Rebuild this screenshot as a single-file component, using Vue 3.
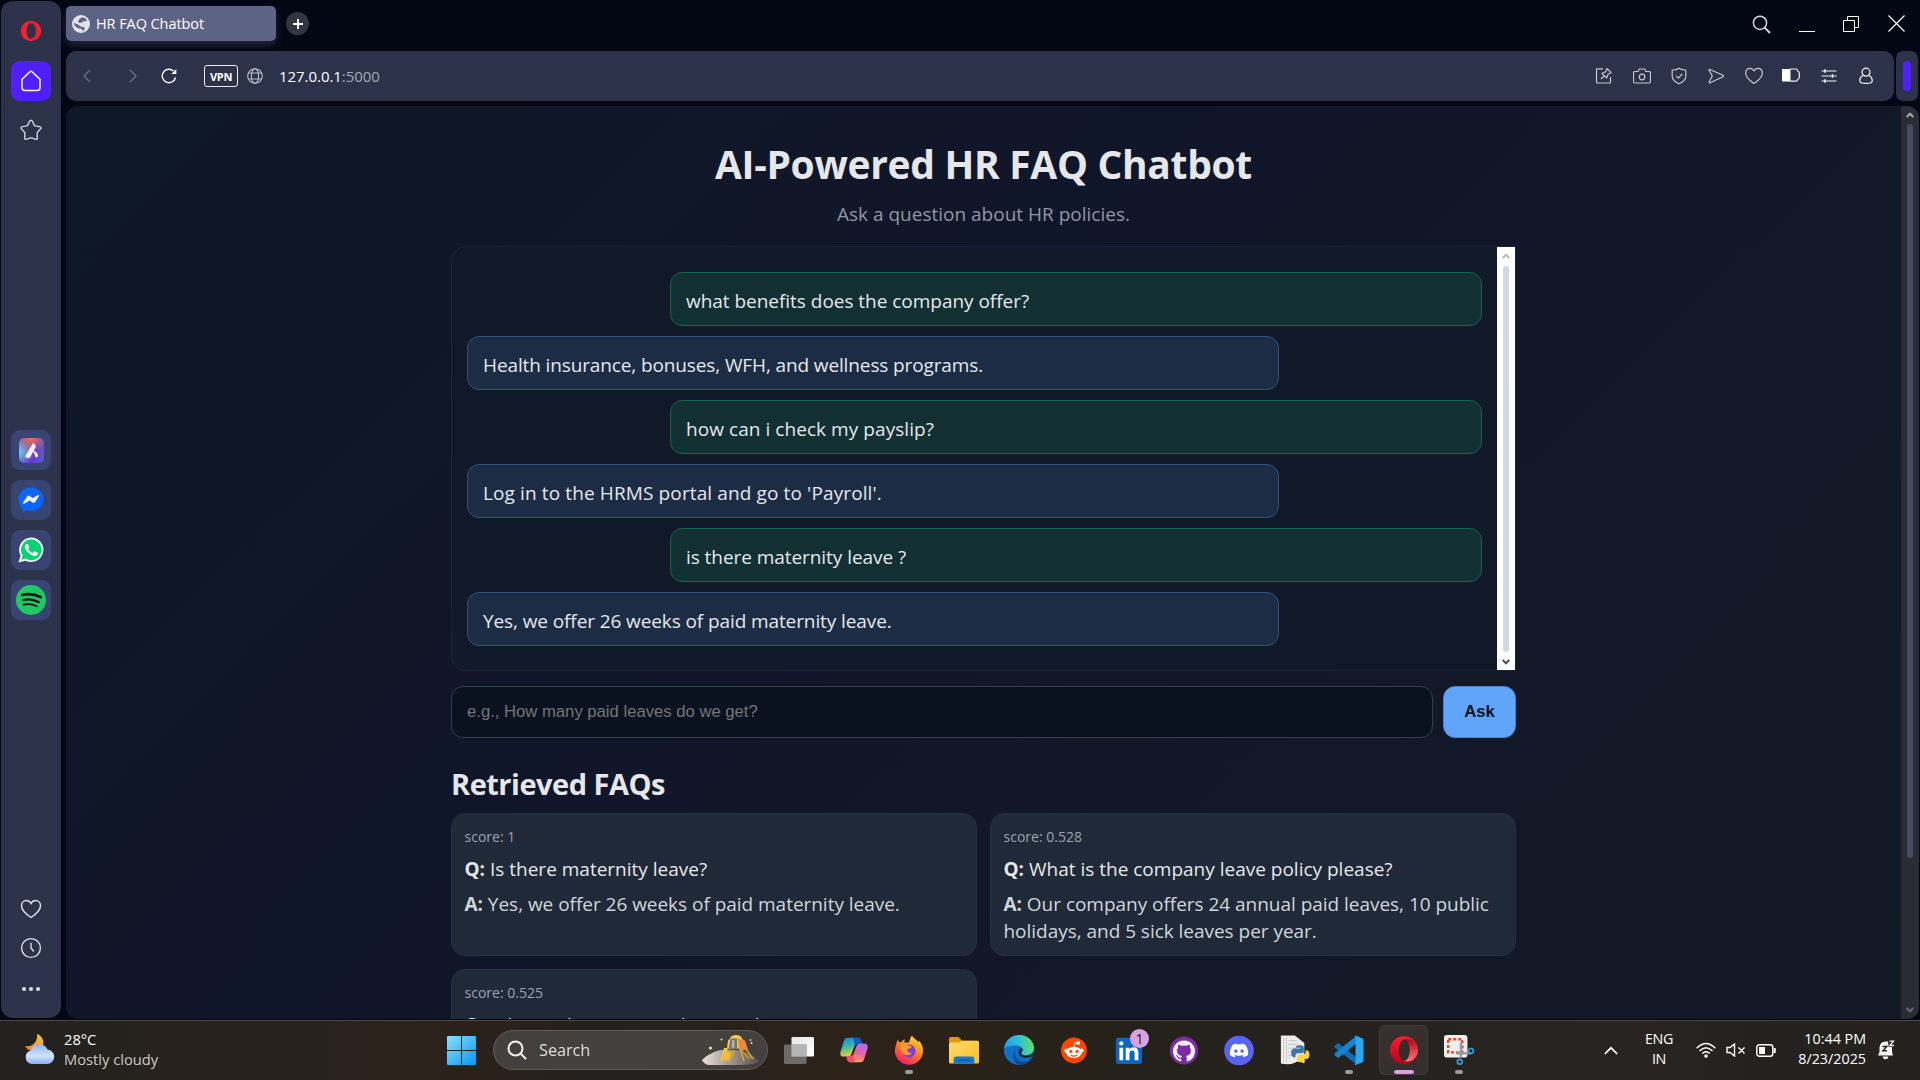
<script setup>
const messages = [
  { who: 'user', text: 'what benefits does the company offer?', track: -0.03 },
  { who: 'bot', text: 'Health insurance, bonuses, WFH, and wellness programs.', track: -0.12 },
  { who: 'user', text: 'how can i check my payslip?', track: 0.06 },
  { who: 'bot', text: "Log in to the HRMS portal and go to 'Payroll'.", track: 0.12 },
  { who: 'user', text: 'is there maternity leave ?', track: -0.06 },
  { who: 'bot', text: 'Yes, we offer 26 weeks of paid maternity leave.', track: -0.1 },
]

const faqs = [
  { score: '1', q: 'Is there maternity leave?', a: 'Yes, we offer 26 weeks of paid maternity leave.' },
  { score: '0.528', q: 'What is the company leave policy please?', a: 'Our company offers 24 annual paid leaves, 10 public holidays, and 5 sick leaves per year.' },
  { score: '0.525', q: 'What is the company leave policy?', a: '' },
]
</script>

<template>
  <div class="desktop">
    <div class="browser">
      <aside class="sidebar">
        <svg class="opera-logo" width="22" height="22" viewBox="0 0 22 22"><path fill="#ff1b2d" fill-rule="evenodd" d="M11 .8a10.2 10.2 0 1 0 0 20.4A10.2 10.2 0 0 0 11 .8zm0 2.400c2.700 0 4.800 3.400 4.800 7.800s-2.100 7.800-4.800 7.800S6.600 15.400 6.600 11 8.300 3.200 11 3.200z"/><path d="M12.500 1.200c3 1.500 4.600 5.400 4.600 9.800s-1.600 8.300-4.600 9.800" fill="none" stroke="#2c324a" stroke-width=".5" opacity=".5"/></svg>
        <div class="home">
          <svg width="24" height="24" viewBox="0 0 24 24" fill="none" stroke="#fff" stroke-width="1.500" stroke-linejoin="round"><path d="M3 10.200 11 2.700q1-.9 2 0l8 7.500V18.500a3 3 0 0 1-3 3H6a3 3 0 0 1-3-3z"/></svg>
        </div>
        <svg class="star" width="24" height="24" viewBox="0 0 24 24" fill="none" stroke="#cdd5e0" stroke-width="1.400" stroke-linejoin="round"><path d="M10.300 3.700q1.700-3 3.400 0l1.400 3.200q.4.900 1.400 1l3.900.7q2.800.7.8 2.700l-2.500 2.600q-.7.7-.6 1.600l.2 4.300q.1 2-1.700 1.500l-3.200-1.100q-1.400-.4-2.800 0l-3.200 1.100q-1.800.5-1.700-1.500l.2-4.300q.1-.9-.6-1.600l-2.500-2.600q-2-2 .8-2.700l3.900-.7q1-.1 1.400-1z"/></svg>
        <div class="apps">
          <div class="app">
            <div class="aria"><svg width="25" height="25" viewBox="0 0 25 25"><path d="M14.400 6 7 18.500q1.500 1.500 3.500.3L16 8.500z" stroke="#f3f1f6" stroke-width="1.600" stroke-linejoin="round" fill="#f3f1f6"/><path d="M13.300 12.800q4.500.2 5.700 4.500.3 2-1.600 1.900-1.500-.2-1.600-2-.3-2.500-2.500-4.400z" fill="#f3f1f6"/></svg></div>
          </div>
          <div class="app">
            <svg width="26" height="26" viewBox="0 0 26 26"><path fill="#0a66ff" d="M13 .5C6 .5.500 5.700.500 12.300c0 3.900 1.700 6.900 4.500 9v4l3.300-2c1.500.5 3 .8 4.700.8 7 0 12.500-5.200 12.500-11.800S20 .5 13 .5z"/><path fill="#eef0f5" d="m5 15.800 4.200-6.500q1.100-1.500 2.600-.4l2.800 2 5.500-2.800q1.600-.6.900.8l-3.800 6.200q-1.200 1.600-2.700.5l-2.800-2.100-5.500 3.200q-1.700.6-1.200-.9z"/></svg>
          </div>
          <div class="app">
            <svg width="26" height="26" viewBox="0 0 26 26"><path fill="#f0f0f3" d="M13.300.5A12.300 12.300 0 0 0 2.500 18.700L.4 25.600l7-1.900A12.300 12.300 0 1 0 13.300.5z"/><path fill="#06d472" d="M13.300 2.600a10.300 10.300 0 0 0-8.600 15.900l-1.300 4.300 4.400-1.200A10.300 10.300 0 1 0 13.300 2.600z"/><path fill="#f0f0f3" d="M8.200 7.300c.5-.5 1.600-.5 1.900.1l1.100 2.600c.2.600-.3 1.200-1 2 1 2 2.500 3.300 4.600 4.100l1.300-1.500c.3-.3.700-.3 1.100-.1l2.500 1.200c.6.400.2 1.900-.7 2.600-3.600 2.800-12-4-12-8.300 0-1.300.5-2.100 1.200-2.700z"/></svg>
          </div>
          <div class="app">
            <svg width="30" height="30" viewBox="0 0 30 30"><circle cx="15" cy="15" r="15" fill="#1fc863"/><g fill="none" stroke="#0b1410" stroke-linecap="round"><path d="M6.300 10q9.500-2.400 18.500 2.200" stroke-width="2.600"/><path d="M7.200 15q8-2 15.500 2" stroke-width="2.200"/><path d="M7.600 19.600q7-1.700 13.200 1.700" stroke-width="1.800"/></g></svg>
          </div>
        </div>
        <div class="side-bottom">
          <svg width="22" height="20" viewBox="0 0 22 20" fill="none" stroke="#d7dde6" stroke-width="1.500"><path d="M11 18.500C8 16.500 1.500 12 1.500 6.800 1.500 3.500 3.800 1.500 6.300 1.500c2 0 3.700 1 4.700 3 1-2 2.700-3 4.700-3 2.500 0 4.800 2 4.800 5.300 0 5.200-6.500 9.700-9.500 11.700z"/></svg>
          <svg width="22" height="22" viewBox="0 0 22 22" fill="none" stroke="#d7dde6" stroke-width="1.400"><circle cx="11" cy="11" r="9.400"/><path d="M11 5.800V11l2.800 3.500"/></svg>
          <svg width="22" height="8" viewBox="0 0 22 8" fill="#d7dde6"><circle cx="4" cy="4" r="2.100"/><circle cx="11" cy="4" r="2.100"/><circle cx="18" cy="4" r="2.100"/></svg>
        </div>
      </aside>

      <div class="main">
        <header class="tabs">
          <div class="tab">
            <svg width="18" height="18" viewBox="0 0 18 18"><circle cx="9" cy="9" r="9" fill="#e2e3e8"/><path fill="#5d6384" d="M9.500 2.500c2.500-.5 5 1 5.500 3l-1.500 1-2-.5-1.500 1.500-2.500.5L6 6.500l1-2zM2 8l4 1.500 2.500 2 3 .5 1.500 1.500-2 3-1-2.500-3-.5L4 12 2 9.500z"/></svg>
            <span>HR FAQ Chatbot</span>
          </div>
          <div class="new-tab"><svg width="10" height="10" viewBox="0 0 10 10" stroke="#fff" stroke-width="2"><path d="M5 0v10M0 5h10"/></svg></div>
          <div class="win">
            <svg width="19" height="19" viewBox="0 0 19 19" fill="none" stroke="#d5d7dd" stroke-width="1.500"><circle cx="8" cy="7.800" r="6.600"/><path d="m12.600 12.600 5.400 5.400" stroke-width="2"/></svg>
            <svg width="16" height="17" viewBox="0 0 16 17"><path d="M0 16.500h16" stroke="#fff"/></svg>
            <svg width="17" height="17" viewBox="0 0 17 17" fill="none" stroke="#fff"><path d="M.5 5.500h11v11H.5zM4.500 5V1.500h11v11H12"/></svg>
            <svg width="17" height="17" viewBox="0 0 17 17" stroke="#fff" stroke-width="1.200"><path d="m.5.500 16 16M16.500.500l-16 16"/></svg>
          </div>
        </header>

        <div class="bar-row">
          <div class="toolbar">
            <div class="nav">
              <svg width="8" height="14" viewBox="0 0 8 14" fill="none" stroke="#686e80" stroke-width="1.400"><path d="M7 1 1 7l6 6"/></svg>
              <svg width="8" height="14" viewBox="0 0 8 14" fill="none" stroke="#686e80" stroke-width="1.400"><path d="m1 1 6 6-6 6"/></svg>
              <svg width="16" height="16" viewBox="0 0 16 16" fill="none" stroke="#fff" stroke-width="1.400"><path d="M14.500 9.500A6.700 6.700 0 1 1 12.500 3"/><path d="M15.300 1v5h-5z" fill="#fff" stroke="none"/></svg>
            </div>
            <div class="vpn">VPN</div>
            <svg class="globe" width="16" height="16" viewBox="0 0 16 16" fill="none" stroke="#b9bec8" stroke-width="1.100"><circle cx="8" cy="8" r="7.300"/><ellipse cx="8" cy="8" rx="3.600" ry="7.300"/><path d="M1.500 5h13M1.500 11h13"/></svg>
            <div class="url">127.0.0.1<i>:5000</i></div>
            <div class="tools">
              <svg viewBox="0 0 18 18"><path d="M8 1.800H2q-.5 0-.5.500V15q0 1 1 1h12.500q.5 0 .5-.5V10M6 12l3-3M12 1.500l4.200 4.200-3 1.300-1.500 4-4.700-4.700 3.700-1.600z"/></svg>
              <svg viewBox="0 0 18 18"><path d="M2 4.500h3L6.300 2h5.400L13 4.500h3q1.500 0 1.500 1.500v8.500q0 1.500-1.500 1.500H2q-1.500 0-1.500-1.500V6Q.5 4.500 2 4.500z"/><circle cx="9" cy="10" r="2.800"/></svg>
              <svg viewBox="0 0 18 18"><path d="M9 1.200q3 2 6.800 1.800v6.300Q15.500 14 9 16.800 2.500 14 2.200 9.300V3Q6 3.200 9 1.200zM6 8.800l2.300 2.300L12.200 7"/></svg>
              <svg viewBox="0 0 18 18"><path d="M2.200 2.200 16 8.300q1 .7 0 1.400L3.200 15.800q-1.500.3-1-1L5.300 9 2.200 3.500z"/></svg>
              <svg viewBox="0 0 18 18"><path d="M9 16.500C6 14.500.7 11 .7 6.200.7 3.200 2.600 1.300 5 1.300c1.800 0 3.200.9 4 2.700.8-1.800 2.200-2.700 4-2.700 2.400 0 4.300 1.900 4.300 4.900 0 4.800-5.300 8.300-8.300 10.300z"/></svg>
              <svg viewBox="0 0 18 18" class="batt"><path d="M0 2h8.500v12.500H0z" fill="#fff" stroke="none"/><path d="M8 2h6q1.500 0 1.500 1.500v.5q1.800.5 1.800 2v4.500q0 1.500-1.800 2v.5q0 1.200-1.500 1.200H8"/></svg>
              <svg viewBox="0 0 18 18"><path d="M1.500 4h15M1.500 9h15M1.500 14h15" /><path d="M5 2.300v3.400M12.500 7.300v3.400M5 12.300v3.400" stroke-width="1.600"/></svg>
              <svg viewBox="0 0 18 18"><circle cx="9" cy="5.200" r="4"/><path d="M5.700 8.500C3.500 10 2.700 12 2.700 13.500c0 2 1.300 2.900 6.300 2.900s6.300-.9 6.300-2.900c0-1.500-.8-3.500-3-5"/></svg>
            </div>
          </div>
          <div class="mini"><b></b></div>
        </div>

        <div class="viewport">
          <div class="page">
            <h1>AI-Powered HR FAQ Chatbot</h1>
            <p class="sub">Ask a question about HR policies.</p>
            <section class="chat">
              <div class="log">
                <div v-for="m in messages" :key="m.text" class="msg" :class="m.who" :style="{ letterSpacing: m.track + 'px' }">{{ m.text }}</div>
              </div>
              <div class="sb">
                <svg width="8" height="6" viewBox="0 0 8 6" fill="none" stroke="#b9b9b9" stroke-width="2"><path d="m.7 5 3.300-3.300L7.300 5"/></svg>
                <b></b>
                <svg width="8" height="6" viewBox="0 0 8 6" fill="none" stroke="#505050" stroke-width="2"><path d="m.7 1 3.300 3.300L7.300 1"/></svg>
              </div>
            </section>
            <div class="ask">
              <div class="field">e.g., How many paid leaves do we get?</div>
              <div class="btn">Ask</div>
            </div>
            <h2>Retrieved FAQs</h2>
            <div class="cards">
              <article v-for="f in faqs" :key="f.score" class="card">
                <div class="score">score: {{ f.score }}</div>
                <div class="q"><b>Q:</b> {{ f.q }}</div>
                <div v-if="f.a" class="a"><b>A:</b> {{ f.a }}</div>
              </article>
            </div>
          </div>
          <div class="psb">
            <svg width="8" height="6" viewBox="0 0 8 6" fill="none" stroke="#a5a5aa" stroke-width="2"><path d="m.7 5 3.300-3.300L7.300 5"/></svg>
            <b></b>
            <svg width="8" height="6" viewBox="0 0 8 6" fill="none" stroke="#66666e" stroke-width="2"><path d="m.7 1 3.300 3.300L7.300 1"/></svg>
          </div>
        </div>
      </div>
    </div>

    <footer class="taskbar">
      <div class="weather">
        <svg width="32" height="32" viewBox="0 0 32 32">
          <defs>
            <linearGradient id="moon" x1="1" y1="0" x2="0" y2="1"><stop offset="0" stop-color="#f5c53a"/><stop offset="1" stop-color="#ee7d22"/></linearGradient>
            <linearGradient id="cloud" x1="0" y1="0" x2="0" y2="1"><stop offset="0" stop-color="#8fb5ef"/><stop offset=".6" stop-color="#d3e2fa"/><stop offset="1" stop-color="#86aef2"/></linearGradient>
          </defs>
          <path fill="url(#moon)" d="M13 0c7 2 8 11 4 15-4 3.500-13 3-16-3 8 1.500 13-5 12-12z"/>
          <path fill="url(#cloud)" d="M7.500 30a7 7 0 0 1-.8-13.600A9 9 0 0 1 23.500 15.500 7.300 7.300 0 0 1 24 30z"/>
        </svg>
        <div><span>28°C</span><small>Mostly cloudy</small></div>
      </div>

      <svg class="start" width="29" height="29" viewBox="0 0 29 29"><defs><linearGradient id="win" x1="0" y1="0" x2="1" y2="1"><stop offset="0" stop-color="#86e1fb"/><stop offset="1" stop-color="#0a95f5"/></linearGradient></defs><path fill="url(#win)" d="M0 1q0-1 1-1h13v14H0zM15 0h13q1 0 1 1v13H15zM0 15h14v14H1q-1 0-1-1zM15 15h14v13q0 1-1 1H15z"/></svg>

      <div class="search">
        <svg width="20" height="20" viewBox="0 0 20 20" fill="none" stroke="#f1f1f1" stroke-width="2"><circle cx="8.500" cy="8.500" r="7"/><path d="m13.500 13.500 5 5" stroke-linecap="round"/></svg>
        <span>Search</span>
        <svg class="lander" width="58" height="32" viewBox="0 0 58 32">
          <defs><linearGradient id="ground"><stop offset="0" stop-color="#e9e2d8"/><stop offset=".45" stop-color="#a79d94"/><stop offset="1" stop-color="#574f4d"/></linearGradient></defs>
          <path fill="url(#ground)" d="M0 26q10-10 24-10.500Q48 15 57 28q-6 3-20 3H6Q2 30 0 26z"/>
          <path fill="#c08a28" d="M36 14h3l10 11h-3z"/><path fill="#f2c24a" d="m22 14-4 13h3l5-13z"/>
          <path fill="#f5c94c" d="M28 4.500Q29 1 34 1t6 3.500l3 3v7H25l1-8z"/><path fill="#e88a3a" d="m36 4.500 7 2 3 9-9 1z"/><path fill="#6d7176" d="M28.500 4.500H35V15l-8-1z"/><path fill="#aeb4ba" d="M30 6h2.500v8l-3-.5z"/>
          <path fill="#eebb3c" d="m23 17.500 10 1-5 8H17z"/><path fill="#d49b32" d="m30 17 3 0-4 9-2 0z"/><path stroke="#d1a453" stroke-width="1.500" d="m44 15 7 10M38 15l4 12"/>
          <g fill="#f1dfae"><circle cx="8.500" cy="14" r="1.500"/><circle cx="19.500" cy="5.500" r="1"/><circle cx="48.500" cy="6" r=".9"/><circle cx="49.500" cy="9" r="1"/></g>
        </svg>
      </div>

      <nav class="dock">
        <div class="item"><svg viewBox="0 0 32 32"><defs><linearGradient id="tv" x1="0" y1="0" x2="1" y2="1"><stop offset="0" stop-color="#e6e6e6"/><stop offset="1" stop-color="#fff"/></linearGradient></defs><rect x="8" y="2" width="24" height="21" rx="1.500" fill="url(#tv)"/><rect x="0" y="10" width="24" height="21" rx="1.500" fill="#777" opacity=".85"/><path d="M8 10h16v13H8z" fill="#b5b5b5"/></svg></div>
        <div class="item"><svg viewBox="0 0 32 32"><defs><linearGradient id="cpa" x1="0" y1="0" x2=".3" y2="1"><stop offset="0" stop-color="#1a7fe0"/><stop offset=".5" stop-color="#2fb8b0"/><stop offset="1" stop-color="#f5d21c"/></linearGradient><linearGradient id="cpb" x1=".5" y1="0" x2=".3" y2="1"><stop offset="0" stop-color="#a96cf5"/><stop offset=".5" stop-color="#ee5fa0"/><stop offset="1" stop-color="#ffa64d"/></linearGradient></defs>
          <path fill="url(#cpa)" d="M9 3h11q2.500 0 3.200 2.600L24 8.500h-4q-2.500 0-3.200 2.400L13.500 20q-.9 3-4 3H5q-4.500 0-3.500-5L5 7q1-4 4-4z"/><path fill="#1556c6" d="M15 3h5q2.500 0 3.200 2.600L24.300 9.500H20q-2 0-3 1.500z"/>
          <path fill="url(#cpb)" d="M23 29H12q-2.500 0-3.200-2.600L8 23.500h4q2.500 0 3.200-2.400L18.500 12q.9-3 4-3H27q4.500 0 3.500 5L27 25q-1 4-4 4z"/><path fill="#f0506a" d="M17 29h-5q-2.500 0-3.200-2.600L7.700 22.500H12q2 0 3-1.500z"/><path fill="#2a211b" d="m17.800 11 1.500-1.300L14.500 21l-1.800 1.200z"/></svg></div>
        <div class="item run"><svg viewBox="0 0 32 32"><defs><linearGradient id="ff" x1=".8" y1="0" x2=".3" y2="1"><stop offset="0" stop-color="#ffe03a"/><stop offset=".45" stop-color="#ff8a1e"/><stop offset="1" stop-color="#f5156c"/></linearGradient></defs><path fill="url(#ff)" d="M19 .5c2 3 5 4.500 7 7l1-1.500c3 4 4 7 4 10.500A15 15 0 0 1 1 17C1 12 3 8 4 5l2 3 2-.5c1-1.500 2-2.500 3.500-3L11 8h5c1-3 1.500-5 3-7.500z"/><circle cx="16" cy="17" r="7" fill="#7542e5"/><path fill="#ff9a2a" d="M6 12c3-3 6-3 9-1l4 1.500c-1 2-3 2-4.500 2.500-1 3 2 5 5 4-3 4-9 3-11-1-1.500-2-2.500-4-2.500-6z"/></svg></div>
        <div class="item"><svg viewBox="0 0 32 32"><defs><linearGradient id="fold" x1="0" y1="0" x2="1" y2="1"><stop offset="0" stop-color="#ffdd70"/><stop offset="1" stop-color="#fbbb22"/></linearGradient></defs><path fill="#e09a0c" d="M0 4q0-2 2-2h8l4 4h16q2 0 2 2v6H0z"/><path fill="url(#fold)" d="M0 10q0-2 2-2h9l3-2h16q2 0 2 2v21q0 1.500-1.500 1.500h-29Q0 30.500 0 29z"/><path fill="#1378cf" d="M5 30.500V26q0-3 3-3h16q3 0 3 3v4.500z"/><path fill="#0b4f9c" d="M10 26.300h13v1.200H10z"/></svg></div>
        <div class="item"><svg viewBox="0 0 32 32"><defs><linearGradient id="ed" x1="0" y1=".5" x2="1" y2=".4"><stop offset="0" stop-color="#1d9fe8"/><stop offset=".5" stop-color="#2fc0d6"/><stop offset="1" stop-color="#62e067"/></linearGradient></defs><circle cx="16" cy="16" r="16" fill="#0f70cc"/><path fill="url(#ed)" d="M.2 14.500C1 6 8 0 16 0c9 0 16 6.500 16 13.500 0 5-4 8-8.500 8-4 0-6-1.500-4.500-3.200 2-2.500.5-6.800-5-7C8 11 2 12.500.2 14.500z"/><path fill="#10488f" d="M12.500 15c-3 6 1 13.500 9 13.500 4 0 6.500-1.500 8.500-4-2.500 4.500-7.500 7.500-13.500 7.500C10 31 7.500 20 12.500 15z"/><path fill="#27231f" d="M19.500 14.500c1.200 2-1.200 3.500-1.200 5 0 2 4.200 3.500 8.200 2.200 2-.6 4-2 5.700-3.900-.3 2-.8 3.500-1.500 4.700-3.200 2-9 2.500-12.700.3-3.500-2.300-3-6.500-.5-8.500.7-.6 1.500-.6 2 .2z"/></svg></div>
        <div class="item"><svg viewBox="0 0 32 32"><circle cx="16" cy="16.500" r="13.800" fill="#ff4500"/><g fill="#fff"><ellipse cx="16" cy="18.500" rx="8.500" ry="6"/><circle cx="7.800" cy="16.500" r="2.100"/><circle cx="24.200" cy="16.500" r="2.100"/><circle cx="20.500" cy="8.500" r="2"/></g><path d="m16 13 1-5 3.500.7" fill="none" stroke="#fff"/><circle cx="12.700" cy="17.500" r="1.700" fill="#ff4500"/><circle cx="19.300" cy="17.500" r="1.700" fill="#ff4500"/><path d="M12.500 21.300q3.500 2.400 7 0" fill="none" stroke="#ff4500" stroke-width="1.200"/></svg></div>
        <div class="item"><svg viewBox="0 0 32 32"><rect x="2" y="3" width="28" height="28" rx="2.500" fill="#0b66c3"/><g fill="#fff"><circle cx="7.800" cy="9" r="2.300"/><path d="M5.800 13.500h4V27h-4zM12.500 13.500h3.800v2q1.400-2.400 4.600-2.400 5.100 0 5.100 6V27h-4v-7.200q0-3.200-2.500-3.200-3 0-3 3.400v7h-4z"/></g></svg><em>1</em></div>
        <div class="item"><svg viewBox="0 0 32 32"><circle cx="16" cy="16.500" r="15" fill="#7a2da0"/><path fill="#f5eef8" d="M16 5.500A11.500 11.500 0 0 0 12.300 28c.6.100.8-.3.800-.6v-2.300c-3.200.7-3.900-1.300-3.900-1.300-.5-1.400-1.300-1.700-1.300-1.700-1-.7.100-.7.100-.7 1.200.1 1.800 1.200 1.800 1.200 1 1.800 2.700 1.300 3.400 1 .1-.8.400-1.300.7-1.600-2.600-.3-5.300-1.300-5.300-5.700 0-1.300.4-2.300 1.200-3.100-.1-.3-.5-1.500.1-3.100 0 0 1-.3 3.200 1.200a11 11 0 0 1 5.800 0c2.200-1.500 3.200-1.200 3.200-1.200.6 1.600.2 2.800.1 3.100.8.800 1.200 1.800 1.200 3.100 0 4.400-2.700 5.400-5.300 5.700.4.400.8 1.100.8 2.100v3.300c0 .3.200.7.800.6A11.500 11.500 0 0 0 16 5.500z" transform="translate(0 .3)"/><path fill="#7a2da0" d="M9.500 10.500q2 .2 3.600 1.200 2.900-.7 5.800 0 1.600-1 3.600-1.200l.5 2.800q1 1.500 1 3.300c0 3.800-2.200 4.800-5 5.200l.8 2v6.200h-7.600v-6.200l.8-2c-2.800-.4-5-1.400-5-5.200q0-1.800 1-3.300z" opacity="0"/></svg></div>
        <div class="item"><svg viewBox="0 0 32 32"><circle cx="16" cy="16.500" r="15.800" fill="#5865f2"/><path fill="#fff" d="M22.800 10.300a16 16 0 0 0-4-1.300l-.6 1.100a15 15 0 0 0-4.400 0L13.200 9a16 16 0 0 0-4 1.300C6.700 14 6 17.700 6.300 21.300a16 16 0 0 0 4.900 2.500l1.100-1.700-1.700-.8.400-.3a11.500 11.500 0 0 0 10 0l.4.300-1.700.8 1.100 1.700a16 16 0 0 0 4.900-2.500c.4-4.200-.7-7.800-2.900-11zM12.700 19.100c-1 0-1.800-.9-1.800-2s.8-2 1.800-2 1.800.9 1.800 2-.8 2-1.800 2zm6.600 0c-1 0-1.800-.9-1.800-2s.8-2 1.800-2 1.800.9 1.800 2-.8 2-1.800 2z"/></svg></div>
        <div class="item"><svg viewBox="0 0 32 32"><path fill="#ececea" d="M2 .5h15l10 8v22q-6-4-10-1-6 3-15 1z"/><path d="M5 3v26M8 3v26" stroke="#b5b5b2" stroke-dasharray="1.500 1"/><path d="M10 6h9M10 10h10M10 14h8M10 18h6M10 22h6" stroke="#c4c4c0"/><path fill="#3a76ab" d="M22.500 11c3.500 0 4 1.500 4 3v3.500q0 2-2 2h-4.500q-2.500 0-2.500 2.500v2H16q-3-1-3-5 0-4.500 3.500-4.500h6.200v-1H18V13c0-1.500 1.500-2 4.500-2z"/><path fill="#fcd23f" d="M23.500 29c-3.500 0-4-1.500-4-3v-3.300q0-2 2-2H26q2.500 0 2.500-2.500v-2H30q2.500 1 2.500 4.800 0 4.500-3.500 4.500h-5.700v1H28V27c0 1.500-1.500 2-4.500 2z"/></svg></div>
        <div class="item run"><svg viewBox="0 0 32 32"><path fill="#0d6db5" d="m.8 11.500 3-2.500q.7-.5 1.300 0L24 24v7.500L.8 13.500q-1-1 0-2z"/><path fill="#1285d0" d="m.8 21.500 3 2.500q.7.500 1.300 0L24 9V.8L.8 19.500q-1 1 0 2z"/><path fill="#2aa7f2" d="m23 .6 7.500 3Q31.500 4 31.500 5.300v22q0 1.200-1 1.700L23 32q-1 .3-2-.5 2 .5 2-1.300V2.300Q23 .5 21 1q1-.8 2-.4z"/></svg></div>
        <div class="item run active"><svg viewBox="0 0 32 32"><defs><linearGradient id="op" x1="0" y1="0" x2="0" y2="1"><stop offset="0" stop-color="#ff1b2d"/><stop offset="1" stop-color="#b3001b"/></linearGradient><linearGradient id="op2" x1="0" y1="0" x2="0" y2="1"><stop offset="0" stop-color="#b0000f"/><stop offset="1" stop-color="#ff7a80"/></linearGradient></defs><circle cx="16" cy="16.200" r="15" fill="url(#op)"/><path fill="url(#op2)" d="M15 5q6-2 11 1.500 5 4.500 5 9.800t-5 9.800q-5 3.500-11 1.400 7-2 7-11.200T15 5z"/><ellipse cx="16.300" cy="16.300" rx="5.800" ry="11.300" fill="#332d2c"/></svg></div>
        <div class="item run snip"><svg viewBox="0 0 32 32"><rect x="0" y="0" width="25" height="24" rx="3" fill="#f0eeee"/><path d="M4.500 4.500h15v14h-15z" fill="none" stroke="#dd4a1c" stroke-width="2.600" stroke-dasharray="3.200 2.200"/><path d="M18 8v16M13 19.500h16" stroke="#8f99a6" stroke-width="2.400"/><g fill="none" stroke="#2a9fe0" stroke-width="1.800"><circle cx="16.800" cy="28.500" r="2.600"/><circle cx="28.800" cy="17" r="2.600"/></g></svg></div>
      </nav>

      <div class="tray">
        <svg class="chev" width="14" height="9" viewBox="0 0 14 9" fill="none" stroke="#fff" stroke-width="1.700"><path d="m.8 8 6.200-6.200L13.200 8"/></svg>
        <div class="lang"><span>ENG</span><span>IN</span></div>
        <svg class="wifi" width="20" height="16" viewBox="0 0 20 16" fill="none" stroke="#fff" stroke-width="1.400"><path d="M.7 6.300q9.300-9.600 18.600 0M3.500 9q6.500-6.600 13 0M6.200 11.600q3.800-3.800 7.600 0"/><circle cx="10" cy="14" r="1.800" fill="#fff" stroke="none"/></svg>
        <svg class="vol" width="20" height="14" viewBox="0 0 20 14" fill="none" stroke="#fff" stroke-width="1.400"><path d="M1 4.500h3L8.500 1v12L4 9.500H1zM12.500 4.500l6 6M18.500 4.500l-6 6"/></svg>
        <svg class="bat" width="20" height="13" viewBox="0 0 20 13" fill="none" stroke="#fff" stroke-width="1.400"><rect x=".8" y=".8" width="16" height="11.400" rx="2.500"/><path d="M3 3h6v7H3z" fill="#fff" stroke="none"/><path d="M18.700 4v5" stroke-width="2"/></svg>
        <div class="clock"><span>10:44 PM</span><span>8/23/2025</span></div>
        <svg class="bell" width="18" height="20" viewBox="0 0 18 20"><path fill="#f5f5f5" d="M1 15.500 2.500 12V7.500q.5-6 6-6H15V12l1 3.500zM5.500 16.500h6q-.5 2.700-3 2.700t-3-2.700z"/><path d="M5.500 6.500h4.300l-4 4.300H10" fill="none" stroke="#25211f" stroke-width="1.400"/><path d="M11 0h7v7h-6.500z" fill="#25211f"/><path d="M12.500 1.200h4l-3.700 4.300H17" fill="none" stroke="#f5f5f5" stroke-width="1.300"/></svg>
      </div>
    </footer>
  </div>
</template>

<style>
body {
  margin: 0;
  overflow: hidden;
  background: #030613;
}
</style>

<style scoped>
.desktop {
  width: 1920px;
  height: 1080px;
  display: flex;
  flex-direction: column;
  overflow: hidden;
  background: #030613;
  font-family: "Open Sans", "Noto Sans", sans-serif;
  color: #e5e7eb;
}
svg { display: block; flex: none; }
.browser { height: 1020px; display: flex; }

/* sidebar */
.sidebar {
  width: 60px;
  height: 1017px;
  margin: 1px 5px 0 1px;
  border-radius: 12px;
  background: #2c324a;
  display: flex;
  flex-direction: column;
  align-items: center;
  flex: none;
}
.opera-logo { margin-top: 19px; }
.home {
  width: 40px;
  height: 40px;
  margin-top: 19px;
  border-radius: 9px;
  background: #4f1fff;
  display: flex;
  align-items: center;
  justify-content: center;
}
.star { margin: 17px 1px 0 0; }
.apps {
  margin-top: 288px;
  display: flex;
  flex-direction: column;
  gap: 10px;
}
.app {
  width: 40px;
  height: 40px;
  border-radius: 9px;
  background: #384573;
  display: flex;
  align-items: center;
  justify-content: center;
}
.aria {
  width: 25px;
  height: 25px;
  border-radius: 5px;
  background:
    radial-gradient(circle at 50% 0, #f0784a, transparent 55%),
    radial-gradient(circle at 0 55%, #6fd0ea, transparent 55%),
    linear-gradient(100deg, #6a3fc4, #6b2fd0 50%, #5560c8);
}
.side-bottom {
  margin: auto 1px 25px 0;
  display: flex;
  flex-direction: column;
  align-items: center;
}
.side-bottom svg:nth-child(2) { margin: 18px 0 26px; }

/* main column */
.main {
  flex: 1;
  display: flex;
  flex-direction: column;
}
.tabs {
  height: 51px;
  display: flex;
  align-items: flex-start;
}
.tab {
  width: 210px;
  height: 35px;
  margin-top: 6px;
  box-sizing: border-box;
  padding-left: 6px;
  border-radius: 5px;
  background: #5d6384;
  box-shadow: 0 4px 8px rgba(93, 99, 132, 0.35);
  display: flex;
  align-items: center;
  gap: 6px;
  color: #fff;
  font-size: 14.500px;
  letter-spacing: -0.08px;
}
.tab span { padding-bottom: 1px; }
.new-tab {
  width: 23px;
  height: 23px;
  margin: 12px 0 0 10px;
  border-radius: 50%;
  background: #34363f;
  display: flex;
  align-items: center;
  justify-content: center;
}
.win {
  margin: 15px 15px 0 auto;
  display: flex;
  align-items: flex-start;
  gap: 28px;
}
.bar-row {
  height: 50px;
  display: flex;
  gap: 2px;
}
.toolbar {
  width: 1828px;
  border-radius: 10px;
  background: #2c324a;
  display: flex;
  align-items: center;
}
.nav {
  display: flex;
  align-items: center;
  padding-left: 17px;
}
.nav svg:nth-child(2) { margin-left: 38px; }
.nav svg:nth-child(3) { margin-left: 24px; }
.vpn {
  width: 34px;
  height: 22px;
  box-sizing: border-box;
  margin-left: 27px;
  border: 1px solid #eceef2;
  border-radius: 3px;
  font-size: 11px;
  font-weight: 700;
  letter-spacing: -0.3px;
  line-height: 21px;
  text-align: center;
  color: #fff;
}
.globe { margin-left: 9px; }
.url {
  margin-left: 16px;
  font-size: 15px;
  letter-spacing: -0.05px;
  color: #fff;
}
.url i { font-style: normal; color: #a3a9b6; }
.tools {
  margin: 0 19px 0 auto;
  display: flex;
  gap: 19.4px;
}
.tools svg {
  width: 18px;
  height: 18px;
  fill: none;
  stroke: #c3c8d1;
  stroke-width: 1.2;
  stroke-linejoin: round;
}
.tools .batt, .tools svg:nth-child(n+7) { stroke: #f0f2f5; }
.mini {
  width: 22px;
  border-radius: 7px;
  background: #2c324a;
  display: flex;
  justify-content: center;
  align-items: center;
}
.mini b {
  width: 8px;
  height: 30px;
  border-radius: 4px;
  background: #4f1fff;
}

/* page */
.viewport {
  width: 1853px;
  height: 913px;
  margin-top: 5px;
  border-radius: 12px;
  overflow: hidden;
  display: flex;
  background: linear-gradient(135deg, #0f1826, #101629 40%, #131925);
}
.page {
  width: 1065px;
  margin-left: 385px;
  flex: none;
}
h1, h2, .sub { margin: 0; font-weight: 700; white-space: nowrap; }
h1 {
  margin-top: 31px;
  height: 54px;
  line-height: 54px;
  text-align: center;
  font-size: 39px;
  letter-spacing: -0.32px;
}
.sub {
  margin-top: 10px;
  height: 27px;
  line-height: 27px;
  text-align: center;
  font-size: 19px;
  font-weight: 400;
  color: #9096a3;
}
.chat {
  height: 425px;
  box-sizing: border-box;
  margin-top: 18px;
  border: 1px solid #1c2735;
  border-radius: 15px 0 0 15px;
  background: #111827;
  display: flex;
}
.log {
  flex: 1;
  padding: 25px 15px 0;
  display: flex;
  flex-direction: column;
  gap: 10px;
}
.msg {
  width: 812px;
  height: 54px;
  box-sizing: border-box;
  padding-left: 15px;
  border: 1px solid #31507f;
  border-radius: 12px;
  background: #1d2c45;
  font-size: 19px;
  line-height: 56px;
  white-space: nowrap;
}
.msg.user {
  align-self: flex-end;
  background: #122f32;
  border-color: #11674f;
}
.sb {
  width: 18px;
  background: #fff;
  display: flex;
  flex-direction: column;
  align-items: center;
  justify-content: space-between;
  padding: 6px 0 5px;
  box-sizing: border-box;
}
.sb b {
  width: 6px;
  height: 386px;
  border-radius: 3px;
  background: #d1dae3;
}
.ask {
  margin-top: 15px;
  display: flex;
  gap: 10px;
  height: 52px;
  font: 16.67px/50px "Liberation Sans", sans-serif;
}
.field {
  flex: 1;
  box-sizing: border-box;
  padding-left: 15px;
  border: 1px solid #333e4b;
  border-radius: 12px;
  background: #0b121f;
  color: #757575;
}
.btn {
  width: 73px;
  box-sizing: border-box;
  border: 1px solid #4c7fc4;
  border-radius: 12px;
  background: #60a5fa;
  color: #0b1220;
  font-weight: 700;
  text-align: center;
}
h2 {
  margin-top: 25px;
  height: 42px;
  line-height: 42px;
  font-size: 29px;
  letter-spacing: -0.5px;
}
.cards {
  margin-top: 8px;
  display: grid;
  grid-template-columns: 526px 526px;
  gap: 13px;
}
.card {
  height: 143px;
  box-sizing: border-box;
  padding: 10px 12.500px 0;
  border: 1px solid #242f40;
  border-radius: 14px;
  background: #1f2937;
}
.score { font-size: 14px; line-height: 26px; color: #9ca3af; }
.q, .a { font-size: 19px; line-height: 27px; }
.q { margin-top: 6px; }
.a { margin-top: 8px; color: #d1d5db; letter-spacing: -0.03px; }
.psb {
  width: 18px;
  margin-left: auto;
  background: #2a2b35;
  display: flex;
  flex-direction: column;
  align-items: center;
  padding: 6px 0;
  box-sizing: border-box;
}
.psb b {
  width: 6px;
  height: 734px;
  margin-top: 6px;
  border-radius: 3px;
  background: #474b62;
}
.psb svg:last-child { margin-top: auto; }

/* taskbar */
.taskbar {
  height: 60px;
  box-sizing: border-box;
  padding-bottom: 1px;
  border-top: 1px solid #4b4742;
  background: linear-gradient(90deg, #23211f, #28221c 12%, #2b211a 25%, #24211f 32%, #2c2219 44%, #262219 55%, #24211f 70%, #272421 85%, #23221f 93%, #25211e);
  display: flex;
  align-items: center;
  color: #fff;
}
.weather {
  width: 423px;
  padding-left: 24px;
  display: flex;
  align-items: center;
  gap: 8px;
  font-size: 14.700px;
  line-height: 20px;
}
.weather div { display: flex; flex-direction: column; padding-bottom: 3px; }
.weather small { font-size: 14.700px; color: #ccc9c6; }
.search {
  width: 275px;
  height: 40px;
  box-sizing: border-box;
  margin-left: 17px;
  padding: 0 7px 0 13px;
  border: 1px solid #5e5b58;
  border-radius: 20px;
  background: #43403d;
  display: flex;
  align-items: center;
  gap: 12px;
  font-size: 16.200px;
  color: #dedcda;
}
.lander { margin-left: auto; }
.dock {
  margin-left: 6px;
  display: flex;
  gap: 6px;
}
.item {
  position: relative;
  width: 49px;
  height: 50px;
  display: flex;
  align-items: center;
  justify-content: center;
}
.item svg { width: 30px; height: 30px; overflow: visible; margin-bottom: 1px; }
.item.active { background: #352f2e; border-radius: 6px; box-shadow: inset 0 0 0 1px #403a38; }
.item.run::after {
  content: "";
  position: absolute;
  bottom: 1px;
  width: 8px;
  height: 4px;
  border-radius: 2px;
  background: #9c9a98;
}
.item.active::after { width: 20px; background: #d9a0e2; }
.item em {
  position: absolute;
  left: 26px;
  top: 4px;
  width: 19px;
  height: 19px;
  border-radius: 50%;
  background: #d9a0e2;
  color: #201a20;
  font: 14px/19px "Open Sans", sans-serif;
  text-align: center;
}
.tray {
  margin-left: auto;
  padding-right: 25px;
  display: flex;
  align-items: center;
  font-size: 14.300px;
  line-height: 20px;
}
.lang { width: 40px; margin-left: 21px; padding-bottom: 2px; display: flex; flex-direction: column; align-items: center; letter-spacing: -0.3px; }
.wifi { margin-left: 17px; }
.vol { margin-left: 10px; }
.bat { margin-left: 10px; }
.clock { width: 90px; padding-bottom: 3px; display: flex; flex-direction: column; align-items: flex-end; }
.bell { margin-left: 11px; }
</style>
